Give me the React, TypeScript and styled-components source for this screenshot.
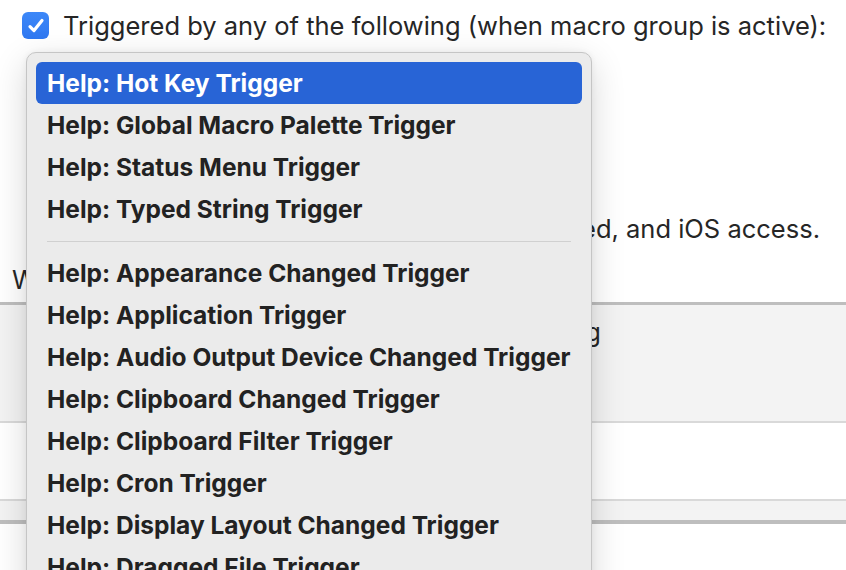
import React from "react";
import styled, { createGlobalStyle } from "styled-components";

const GlobalStyle = createGlobalStyle`
  html, body { margin: 0; padding: 0; background: #ffffff; }
  body { font-family: Inter, "Liberation Sans", Arial, sans-serif; overflow: hidden; }
  * { box-sizing: border-box; }
`;

const Page = styled.div`
  position: relative;
  width: 846px;
  height: 570px;
  overflow: hidden;
  background: #ffffff;
  color: #262626;
`;

const TriggerRow = styled.label`
  display: flex;
  align-items: center;
  gap: 14px;
  padding: 12px 0 0 22px;
  height: 39px;
  font-size: 25.5px;
  white-space: nowrap;
`;

const Checkbox = styled.span`
  display: flex;
  align-items: center;
  justify-content: center;
  width: 27px;
  height: 27px;
  border-radius: 6px;
  background: linear-gradient(#3d88f8, #2f78f1);
  flex: none;
`;

const Description = styled.p`
  display: flex;
  justify-content: flex-end;
  margin: 173px 0 0 0;
  padding-right: 26px;
  height: 34px;
  line-height: 34px;
  font-size: 25.5px;
  white-space: nowrap;
  overflow: hidden;
`;

const WhenLabel = styled.div`
  margin-top: 19px;
  padding-left: 12px;
  height: 30px;
  line-height: 30px;
  font-size: 25.5px;
  white-space: nowrap;
`;

const Table = styled.div`
  margin-top: 7px;
  border-top: 3px solid #bebebe;
`;

const HeaderBand = styled.div`
  height: 118px;
  background: #f3f3f3;
  border-bottom: 2px solid #d9d9d9;
`;

const HeaderCell = styled.div`
  display: flex;
  justify-content: flex-end;
  width: 601px;
  padding-top: 12px;
  font-size: 25.5px;
  line-height: 30px;
  white-space: nowrap;
  overflow: hidden;
`;

const BodyRow = styled.div`
  height: 78px;
  background: #ffffff;
  border-bottom: 2px solid #d9d9d9;
`;

const FooterBand = styled.div`
  height: 23px;
  background: #f3f3f3;
  border-bottom: 4px solid #bebebe;
`;

const Menu = styled.div`
  position: absolute;
  left: 26px;
  top: 52px;
  width: 566px;
  height: 560px;
  padding: 9px;
  background: #ebebeb;
  border: 1px solid #c5c5c5;
  border-radius: 10px;
  box-shadow: 0 10px 34px rgba(0, 0, 0, 0.16), 0 0 6px rgba(0, 0, 0, 0.06);
  display: flex;
  flex-direction: column;
`;

const Item = styled.div<{ $active?: boolean }>`
  height: 42px;
  flex: none;
  display: flex;
  align-items: center;
  padding-left: 11px;
  border-radius: 6px;
  font-size: 24.5px;
  font-weight: 700;
  white-space: nowrap;
  color: ${(p) => (p.$active ? "#ffffff" : "#222222")};
  background: ${(p) => (p.$active ? "#2864d6" : "transparent")};
`;

const Separator = styled.div`
  flex: none;
  height: 22px;
  display: flex;
  align-items: center;
  padding: 0 11px;
  &::after {
    content: "";
    display: block;
    width: 100%;
    height: 1px;
    background: #d0d0d0;
  }
`;

const topItems = [
  "Help: Hot Key Trigger",
  "Help: Global Macro Palette Trigger",
  "Help: Status Menu Trigger",
  "Help: Typed String Trigger",
];

const moreItems = [
  "Help: Appearance Changed Trigger",
  "Help: Application Trigger",
  "Help: Audio Output Device Changed Trigger",
  "Help: Clipboard Changed Trigger",
  "Help: Clipboard Filter Trigger",
  "Help: Cron Trigger",
  "Help: Display Layout Changed Trigger",
  "Help: Dragged File Trigger",
];

export default function App() {
  return (
    <Page>
      <GlobalStyle />
      <TriggerRow>
        <Checkbox>
          <svg width="20" height="20" viewBox="0 0 20 20">
            <path
              d="M4 10.6 L8 14.6 L16 4.4"
              fill="none"
              stroke="#ffffff"
              strokeWidth="3.2"
              strokeLinecap="round"
              strokeLinejoin="round"
            />
          </svg>
        </Checkbox>
        Triggered by any of the following (when macro group is active):
      </TriggerRow>
      <Description>
        <span>Macros can be triggered from web, if enabled, and iOS access.</span>
      </Description>
      <WhenLabel>When triggered:</WhenLabel>
      <Table>
        <HeaderBand>
          <HeaderCell>
            <span>No macro triggering</span>
          </HeaderCell>
        </HeaderBand>
        <BodyRow />
        <FooterBand />
      </Table>
      <Menu>
        {topItems.map((t, i) => (
          <Item key={t} $active={i === 0}>
            {t}
          </Item>
        ))}
        <Separator />
        {moreItems.map((t) => (
          <Item key={t}>{t}</Item>
        ))}
      </Menu>
    </Page>
  );
}
